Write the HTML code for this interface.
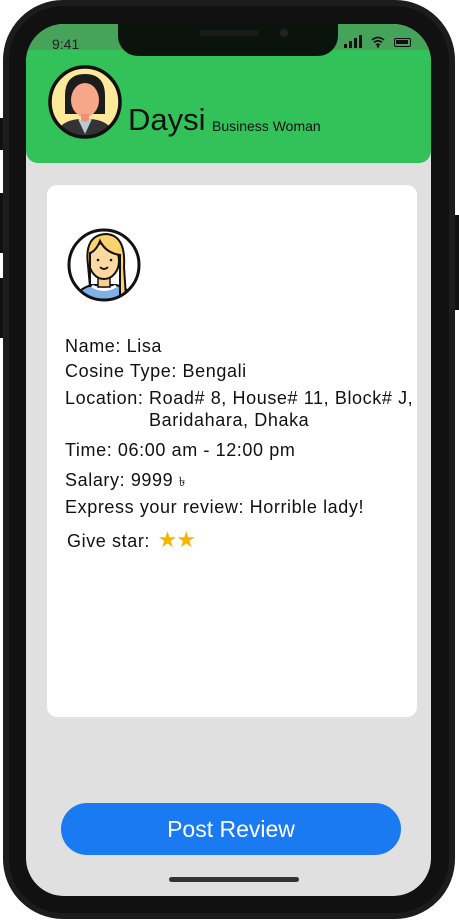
<!DOCTYPE html>
<html><head><meta charset="utf-8"><style>
*{margin:0;padding:0;box-sizing:border-box}
body{width:459px;height:920px;background:#fff;position:relative;overflow:hidden;font-family:"Liberation Sans",sans-serif}
.abs{position:absolute}
.phone{left:3px;top:0;width:452px;height:919px;background:#111;border-radius:60px;border:6px solid #1c1c1c}
.screen{left:26px;top:24px;width:405px;height:872px;background:#e0e0e0;border-radius:38px;overflow:hidden}
.t{position:absolute;font-size:18px;color:#111;white-space:nowrap;letter-spacing:0.6px}
</style></head><body>
<div class="abs" style="left:0;top:118px;width:4px;height:32px;background:#111"></div>
<div class="abs" style="left:0;top:193px;width:4px;height:60px;background:#111"></div>
<div class="abs" style="left:0;top:278px;width:4px;height:60px;background:#111"></div>
<div class="abs" style="left:455px;top:215px;width:4px;height:95px;background:#111"></div>
<div class="abs phone"></div>
<div class="abs screen">
  <div class="abs" style="left:0;top:0;width:405px;height:32px;background:#45a35a"></div>
  <div class="abs" style="left:0;top:26px;width:405px;height:113px;background:#33c159;border-radius:0 0 12px 12px"></div>
  <div class="abs" style="left:26px;top:12px;font-size:14px;color:#222">9:41</div>
  <div class="abs" style="left:318px;top:20px;width:3px;height:4px;background:#111"></div>
  <div class="abs" style="left:323px;top:17px;width:3px;height:7px;background:#111"></div>
  <div class="abs" style="left:328px;top:14px;width:3px;height:10px;background:#111"></div>
  <div class="abs" style="left:333px;top:11px;width:3px;height:13px;background:#111"></div>
  <svg class="abs" style="left:345px;top:12px" width="14" height="12" viewBox="0 0 14 12"><path d="M1 4Q7 -1 13 4M3 6.5Q7 3 11 6.5M5 9Q7 7.5 9 9" stroke="#111" stroke-width="1.6" fill="none"/><circle cx="7" cy="10.5" r="1.2" fill="#111"/></svg>
  <div class="abs" style="left:368px;top:14px;width:17px;height:9px;border:1.3px solid #111;border-radius:2px"><div style="margin:1px;height:4px;width:12px;background:#111"></div></div>
  <div class="abs" style="left:92px;top:-2px;width:220px;height:34px;background:#0a140d;border-radius:0 0 20px 20px"></div>
  <div class="abs" style="left:173px;top:6px;width:60px;height:6px;background:#1a1a1a;border-radius:3px"></div>
  <div class="abs" style="left:252px;top:3px;width:12px;height:12px;background:#222;border-radius:50%;border:2px solid #111"></div>
  <svg class="abs" style="left:21px;top:40px" width="76" height="76" viewBox="0 0 76 76">
    <defs><clipPath id="c1"><circle cx="38" cy="38" r="35"/></clipPath></defs>
    <circle cx="38" cy="38" r="35" fill="#fde99a"/>
    <g clip-path="url(#c1)">
      <path d="M18 32Q18 10 38 10Q58 10 58 32L58 50L18 50Z" fill="#1c1c1c"/>
      <ellipse cx="38" cy="36" rx="14" ry="17" fill="#f8a68a"/>
      <path d="M24 30Q30 14 48 20Q52 24 54 30Q52 14 38 12Q22 14 24 30Z" fill="#1c1c1c"/>
      <rect x="34" y="50" width="8" height="8" fill="#f08f76"/>
      <path d="M10 76L14 62Q20 56 32 55L38 62L44 55Q56 56 62 62L66 76Z" fill="#333"/>
      <path d="M31 55L38 70L45 55L38 58Z" fill="#b9c9d4"/>
    </g>
    <circle cx="38" cy="38" r="35" fill="none" stroke="#111" stroke-width="3.5"/>
  </svg>
  <div class="abs" style="left:102px;top:78px;font-size:31px;color:#111;font-weight:300">Daysi</div>
  <div class="abs" style="left:186px;top:94px;font-size:14px;color:#111">Business Woman</div>
  <div class="abs" style="left:21px;top:161px;width:370px;height:532px;background:#fff;border-radius:10px"></div>
  <svg class="abs" style="left:40px;top:203px" width="76" height="76" viewBox="0 0 76 76">
    <defs><clipPath id="c2"><circle cx="38" cy="38" r="35"/></clipPath></defs>
    <circle cx="38" cy="38" r="35" fill="#fff"/>
    <g clip-path="url(#c2)">
      <path d="M8 76Q10 62 26 58L50 58Q66 62 68 76Z" fill="#7fb0e6" stroke="#111" stroke-width="2"/>
      <path d="M26 59Q38 66 50 59" stroke="#fff" stroke-width="3" fill="none"/>
      <rect x="32" y="48" width="12" height="12" fill="#f7cf8a" stroke="#111" stroke-width="1.5"/>
      <ellipse cx="38" cy="34" rx="15" ry="18" fill="#fcd9a0" stroke="#111" stroke-width="2"/>
      <path d="M22 38Q18 8 40 7Q60 8 58 40L60 70L54 72L54 28Q40 26 34 14Q30 24 24 26L24 60Z" fill="#fdd16b" stroke="#111" stroke-width="2"/>
      <path d="M34 40Q38 44 42 40" stroke="#111" stroke-width="1.6" fill="none"/>
      <circle cx="32" cy="33" r="1.3" fill="#111"/><circle cx="45" cy="33" r="1.3" fill="#111"/>
    </g>
    <circle cx="38" cy="38" r="35" fill="none" stroke="#111" stroke-width="3"/>
  </svg>
  <div class="t" style="left:39px;top:312px">Name: Lisa</div>
  <div class="t" style="left:39px;top:337px">Cosine Type: Bengali</div>
  <div class="t" style="left:39px;top:364px">Location: Road# 8, House# 11, Block# J,</div>
  <div class="t" style="left:123px;top:386px">Baridahara, Dhaka</div>
  <div class="t" style="left:39px;top:416px">Time: 06:00 am - 12:00 pm</div>
  <div class="t" style="left:39px;top:446px">Salary: 9999 <span style="font-size:13px">৳</span></div>
  <div class="t" style="left:39px;top:473px">Express your review: Horrible lady!</div>
  <div class="t" style="left:41px;top:503px">Give star: <span style="color:#f7b500;font-size:22px;margin-left:2px;letter-spacing:-1px">★★</span></div>
  <div class="abs" style="left:35px;top:779px;width:340px;height:52px;background:#1a7af2;border-radius:26px;color:#fff;font-size:23px;text-align:center;line-height:52px">Post Review</div>
  <div class="abs" style="left:143px;top:853px;width:130px;height:5px;background:#333;border-radius:3px"></div>
</div>
</body></html>
